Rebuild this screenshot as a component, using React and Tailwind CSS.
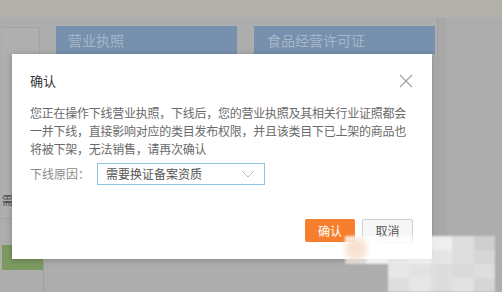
import React from 'react';

const font = { fontFamily: '"Noto Sans CJK SC", "Noto Sans", sans-serif' };

function Backdrop() {
  return (
    <div className="absolute inset-0 flex flex-col bg-[#adadad]">
      <div className="h-[18px] bg-[#b3afab]" />
      <div className="flex flex-1">
        {/* left column */}
        <div className="w-[43px] flex flex-col">
          <div className="mt-[9px] ml-[2px] w-[38px] h-[191px] border-t border-r border-[#a4a4a4] bg-[#afafaf] flex flex-col justify-end pb-[11px]">
            <span className="text-[11px] leading-[14px] text-[#4a4a4a]">需</span>
          </div>
          <div className="h-px bg-[#a2a2a2]" />
          <div className="mt-[26px] ml-[2px] h-[25px] bg-[#7c9a60]" />
        </div>
        {/* tabs */}
        <div className="flex gap-[17px] ml-[13px] mt-[8px] items-start">
          <div className="w-[181px] h-[28px] bg-[#7690ad] px-[12px] flex items-center text-[14px] text-[#a7b7c9]">营业执照</div>
          <div className="w-[181px] h-[28px] bg-[#7690ad] px-[13px] flex items-center text-[14px] text-[#a7b7c9]">食品经营许可证</div>
        </div>
        <div className="ml-[2px] w-[10px] border-l border-[#a2a2a2] bg-[#a8a8a8]" />
      </div>
      <div className="absolute left-[43px] top-[262px] bottom-0 w-px bg-[#9e9e9e]" />
    </div>
  );
}

function Mosaic() {
  const cells = [
    'bg-white/80', 'bg-white/90', 'bg-white/85', 'bg-white/70', 'bg-white/80', 'bg-white/60', 'bg-white/40',
    'bg-white/60', 'bg-white/85', 'bg-white/75', 'bg-white/80', 'bg-white/70', 'bg-white/60', 'bg-white/50',
    'bg-white/0', 'bg-white/0', 'bg-white/70', 'bg-white/65', 'bg-white/60', 'bg-white/55', 'bg-white/60',
    'bg-white/0', 'bg-white/0', 'bg-white/60', 'bg-white/70', 'bg-white/60', 'bg-white/65', 'bg-white/50',
  ];
  return (
    <div className="absolute left-[345px] top-[236px] w-[150px] h-[56px]">
      <div className="grid grid-cols-7 w-full h-full blur-[1px]">
        {cells.map((c, i) => (
          <div key={i} className={c} />
        ))}
      </div>
      <div className="absolute left-0 top-[2px] w-[22px] h-[22px] rounded-full bg-[#f6d9c4]/80 blur-[3px]" />
    </div>
  );
}

export default function App() {
  return (
    <div className="relative w-[502px] h-[292px] overflow-hidden" style={font}>
      <Backdrop />

      <div className="absolute left-[12px] top-[54px] w-[420px] h-[205px] bg-white shadow-[0_1px_6px_rgba(0,0,0,0.25)] flex flex-col">
        <div className="flex items-center justify-between pt-[19px] pl-[18px] pr-[19px]">
          <span className="text-[13px] leading-[16px] text-[#333]">确认</span>
          <svg width="14" height="14" viewBox="0 0 14 14" className="text-[#a0a0a0]">
            <path d="M1 1 L13 13 M13 1 L1 13" stroke="currentColor" strokeWidth="1.1" fill="none" />
          </svg>
        </div>

        <p className="mt-[15px] px-[18px] text-[12px] leading-[18px] tracking-[-0.25px] text-[#6a6a6a] whitespace-nowrap">
          您正在操作下线营业执照，下线后，您的营业执照及其相关行业证照都会<br />
          一并下线，直接影响对应的类目发布权限，并且该类目下已上架的商品也<br />
          将被下架，无法销售，请再次确认
        </p>

        <div className="flex items-center mt-[5px] pl-[18px]">
          <span className="w-[67px] text-[12px] text-[#8a8a8a]">下线原因：</span>
          <div className="w-[168px] h-[22px] border border-[#8fc3e3] flex items-center justify-between pl-[8px] pr-[9px]">
            <span className="text-[12px] text-[#555]">需要换证备案资质</span>
            <svg width="14" height="8" viewBox="0 0 14 8" className="text-[#b5b5b5]">
              <path d="M1 1 L7 7 L13 1" stroke="currentColor" strokeWidth="1" fill="none" />
            </svg>
          </div>
        </div>

        <div className="flex justify-end gap-[7px] mt-auto mb-[16px] pr-[19px]">
          <button className="w-[50px] h-[23px] bg-[#f77e2d] rounded-[2px] text-[12px] text-white">确认</button>
          <button className="w-[51px] h-[24px] bg-[#f6f6f6] border border-[#cfcfcf] rounded-[2px] text-[12px] text-[#555]">取消</button>
        </div>
      </div>

      <Mosaic />
    </div>
  );
}
